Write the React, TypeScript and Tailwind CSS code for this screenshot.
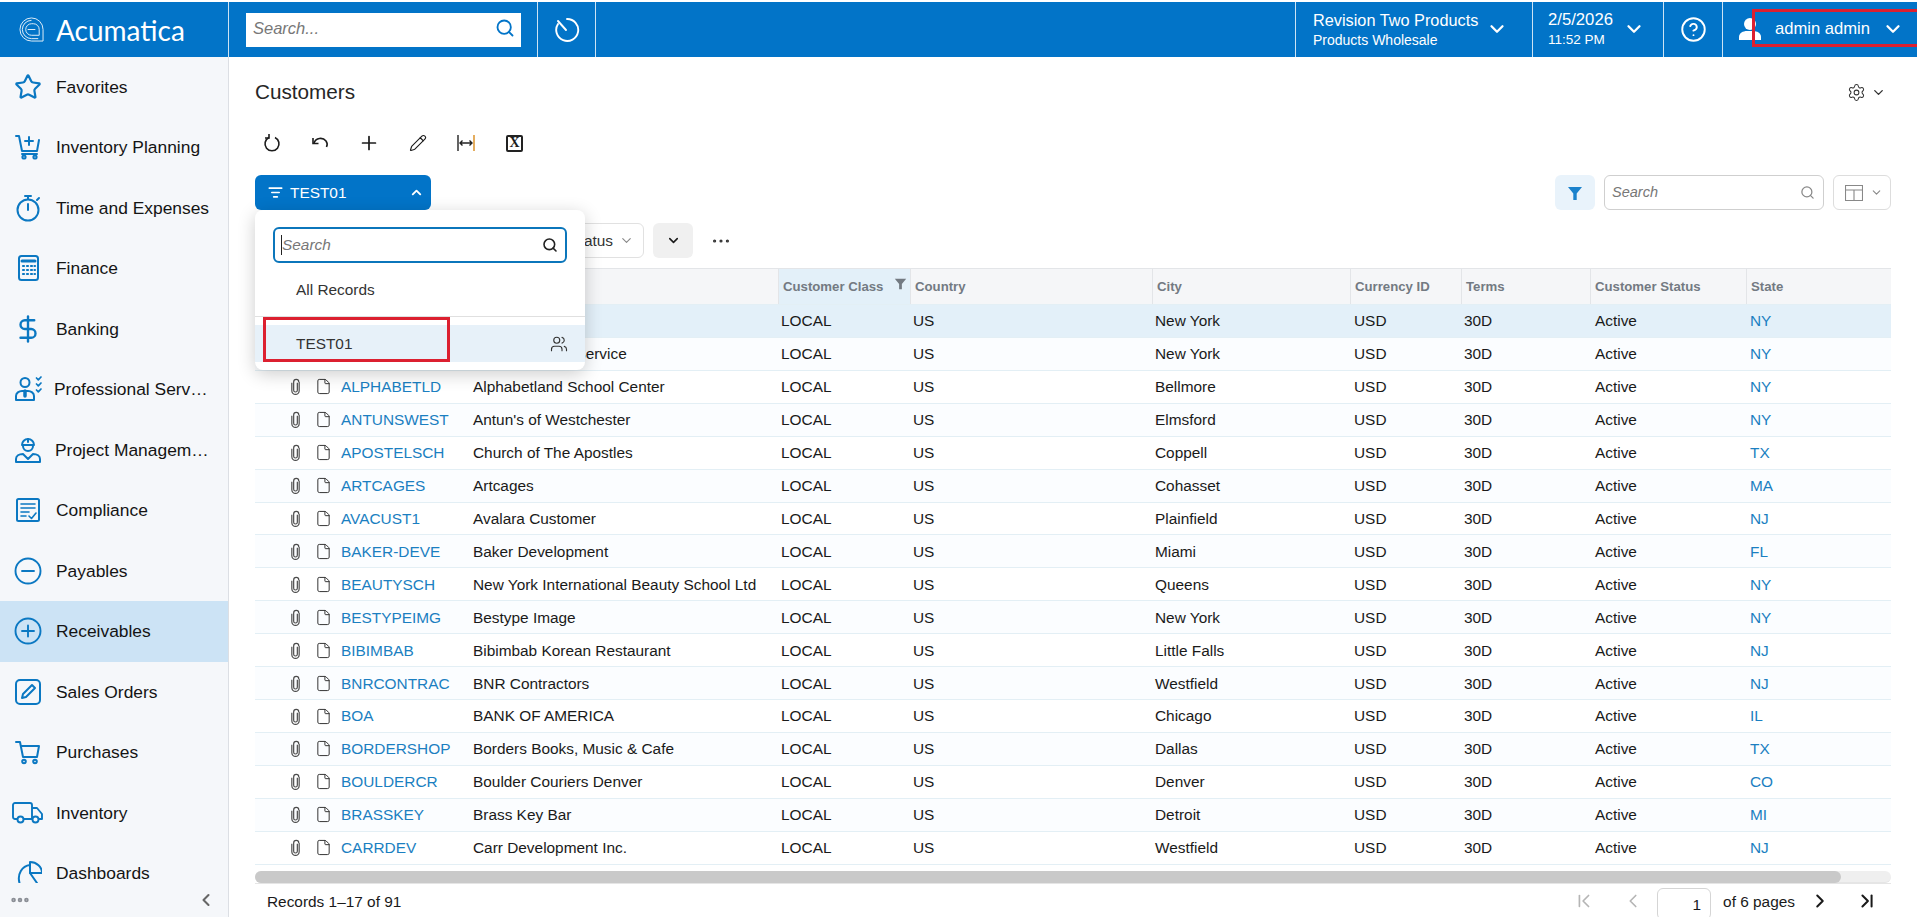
import React from "react";
import {
  ChevronDown,
  ChevronFirst,
  ChevronLast,
  ChevronLeft,
  ChevronRight,
  ChevronUp,
  CircleHelp,
  DollarSign,
  File,
  ListFilter,
  MoreHorizontal,
  Pencil,
  Plus,
  Search,
  Settings,
  Star,
  Users,
} from "lucide-react";

const rows = [
  ["AACUSTOMER", "AA Customer", "New York", "NY"],
  ["ACTIVESTAF", "Active Staffing Service", "New York", "NY"],
  ["ALPHABETLD", "Alphabetland School Center", "Bellmore", "NY"],
  ["ANTUNSWEST", "Antun's of Westchester", "Elmsford", "NY"],
  ["APOSTELSCH", "Church of The Apostles", "Coppell", "TX"],
  ["ARTCAGES", "Artcages", "Cohasset", "MA"],
  ["AVACUST1", "Avalara Customer", "Plainfield", "NJ"],
  ["BAKER-DEVE", "Baker Development", "Miami", "FL"],
  ["BEAUTYSCH", "New York International Beauty School Ltd", "Queens", "NY"],
  ["BESTYPEIMG", "Bestype Image", "New York", "NY"],
  ["BIBIMBAB", "Bibimbab Korean Restaurant", "Little Falls", "NJ"],
  ["BNRCONTRAC", "BNR Contractors", "Westfield", "NJ"],
  ["BOA", "BANK OF AMERICA", "Chicago", "IL"],
  ["BORDERSHOP", "Borders Books, Music & Cafe", "Dallas", "TX"],
  ["BOULDERCR", "Boulder Couriers Denver", "Denver", "CO"],
  ["BRASSKEY", "Brass Key Bar", "Detroit", "MI"],
  ["CARRDEV", "Carr Development Inc.", "Westfield", "NJ"],
];

const gridCols =
  "grid grid-cols-[80px_132px_311px_132px_242px_198px_111px_129px_156px_145px]";

const Glyph = ({ children }: { children: React.ReactNode }) => (
  <svg
    viewBox="0 0 28 28"
    fill="none"
    stroke="currentColor"
    strokeWidth="2"
    strokeLinecap="round"
    strokeLinejoin="round"
    className="w-[28px] h-[28px]"
  >
    {children}
  </svg>
);

// Sidebar icons, drawn to follow the module glyphs
const CartPlus = () => (
  <Glyph>
    <path d="M2 3h3l3 15h15l2-11" />
    <path d="M8 21h15" />
    <circle cx="10" cy="24" r="1.6" />
    <circle cx="21" cy="24" r="1.6" />
    <path d="M15 4v8M11 8h8" />
  </Glyph>
);
const Timer = () => (
  <Glyph>
    <circle cx="14" cy="16" r="10.5" />
    <path d="M14 5V2M11 2h6M14 10v6M23 6l2-2" />
  </Glyph>
);
const Calculator = () => (
  <Glyph>
    <rect x="5" y="2" width="19" height="24" rx="2.5" />
    <path d="M8 7h13" strokeWidth="3" />
    <path
      d="M9 12h1M13 12h1M17 12h1M20.500 12h.5M9 16h1M13 16h1M17 16h1M20.500 16h.5M9 20h1M13 20h1M17 20h1M20.500 20h.5"
      strokeWidth="2.2"
    />
  </Glyph>
);
const ProServices = () => (
  <Glyph>
    <circle cx="11" cy="7.500" r="4.500" />
    <path d="M2 25v-4c0-3 3-5 6-5h6c3 0 6 2 6 5v4z" />
    <path d="M11 16v5" strokeWidth="3.500" />
    <path d="M22.500 3l1.800 1.800L27 2M22.500 9l1.800 1.800L27 8M22.500 15l1.800 1.800L27 14" strokeWidth="1.700" />
  </Glyph>
);
const ProjectMgmt = () => (
  <Glyph>
    <path d="M8 9a6 6 0 0 1 12 0z" />
    <path d="M9 10a5 5 0 0 0 10 0" />
    <path d="M14 3v3" />
    <path d="M2 26v-3c0-3 3-5 7-5l5 5 5-5c4 0 7 2 7 5v3z" />
  </Glyph>
);
const Compliance = () => (
  <Glyph>
    <rect x="3" y="3" width="22" height="22" rx="1.500" />
    <path d="M7 8h14M7 12h14M7 16h8M7 20h5M15 20l2.500 2.500L22 17" strokeWidth="1.600" />
  </Glyph>
);
const CircleSign = ({ plus }: { plus?: boolean }) => (
  <svg viewBox="0 0 28 28" fill="none" stroke="currentColor" strokeWidth="1.900" strokeLinecap="round" className="w-[30px] h-[28px]">
    <circle cx="14" cy="14" r="12.500" />
    <path d="M8 14h12" />
    {plus && <path d="M14 8.500v11" />}
  </svg>
);
const SalesOrder = () => (
  <Glyph>
    <rect x="2" y="2" width="24" height="24" rx="4" />
    <path d="M8 20l1-4 9-9 3 3-9 9z" />
  </Glyph>
);
const Cart = () => (
  <Glyph>
    <path d="M2 4h4l3 15h14l2-11H7" />
    <circle cx="10" cy="23.500" r="1.800" />
    <circle cx="21" cy="23.500" r="1.800" />
  </Glyph>
);
const Truck = () => (
  <svg viewBox="0 0 32 22" fill="none" stroke="currentColor" strokeWidth="1.900" strokeLinejoin="round" className="w-[32px] h-[24px]">
    <path d="M5 17H3a2 2 0 0 1-2-2V3a2 2 0 0 1 2-2h15a2 2 0 0 1 2 2v14h-8" />
    <path d="M20 6h5l5 6v5h-3" />
    <circle cx="8.500" cy="17.500" r="3" />
    <circle cx="23.500" cy="17.500" r="3" />
  </svg>
);
const Pie = () => (
  <Glyph>
    <path d="M16 3a12 11 0 0 1 12 11H16z" />
    <path d="M16 6C8 7 3 15 5.500 24" />
    <path d="M16 14l7 10" />
  </Glyph>
);

const navItems: { label: string; icon: React.ReactNode; active?: boolean; labelClass?: string }[] = [
  { label: "Favorites", icon: <Star className="w-[28px] h-[28px]" strokeWidth={1.900} /> },
  { label: "Inventory Planning", icon: <CartPlus /> },
  { label: "Time and Expenses", icon: <Timer /> },
  { label: "Finance", icon: <Calculator /> },
  { label: "Banking", icon: <DollarSign className="w-[30px] h-[30px]" strokeWidth={1.900} /> },
  { label: "Professional Serv…", icon: <ProServices />, labelClass: "-ml-[2px]" },
  { label: "Project Managem…", icon: <ProjectMgmt />, labelClass: "-ml-[1px]" },
  { label: "Compliance", icon: <Compliance /> },
  { label: "Payables", icon: <CircleSign /> },
  { label: "Receivables", icon: <CircleSign plus />, active: true },
  { label: "Sales Orders", icon: <SalesOrder /> },
  { label: "Purchases", icon: <Cart /> },
  { label: "Inventory", icon: <Truck /> },
  { label: "Dashboards", icon: <Pie /> },
];

const Paperclip = () => (
  <svg viewBox="0 0 12 18" fill="none" stroke="#4b4b4b" strokeWidth="1.300" className="w-[11px] h-[17px]">
    <path d="M8 5v8a2 2 0 0 1-4 0V4a2.800 2.800 0 0 1 5.600 0M2 5v8.500a4 4 0 0 0 8 0V4" />
  </svg>
);

const TopDivider = () => <div className="w-px h-full bg-white/80 shrink-0" />;

const App: React.FC = () => {
  return (
    <div className="w-[1917px] h-[917px] overflow-hidden bg-white pt-[2px] flex flex-col font-['Liberation_Sans',Arial,sans-serif] text-[#1a1a1a]">
      {/* Top bar */}
      <header className="relative h-[55px] shrink-0 flex items-center bg-[#0274c8] text-white">
        <div className="w-[228px] shrink-0 flex items-center pl-[19px] gap-[12px]">
          <svg viewBox="0 0 26 26" fill="none" stroke="white" strokeWidth="1" className="w-[25px] h-[25px] opacity-90">
            <path d="M13 1a12 12 0 0 0 0 24h12V13A12 12 0 0 0 13 1z" />
            <path d="M13 3.500a9.500 9.500 0 0 0 0 19h7" />
            <path d="M13 7a6 6 0 0 0 0 12h8V13a6 6 0 0 0-6-6z" />
            <path d="M9 13h8" />
          </svg>
          <span className="font-['Lato',sans-serif] text-[28px] leading-none">Acumatica</span>
        </div>
        <TopDivider />
        <div className="w-[308px] shrink-0 pl-[17px]">
          <div className="w-[275px] h-[34px] bg-white flex items-center justify-between pl-[7px] pr-[6px] pb-[3px]">
            <span className="italic text-[16.5px] text-[#777]">Search...</span>
            <Search className="w-[20px] h-[20px] text-[#0274c8]" strokeWidth={2.2} />
          </div>
        </div>
        <TopDivider />
        <div className="w-[57px] shrink-0 flex justify-center">
          <svg viewBox="0 0 26 26" fill="none" stroke="white" strokeWidth="1.900" strokeLinecap="round" className="w-[26px] h-[26px]">
            <path d="M13 2a11 11 0 1 1-9 5" />
            <path d="M4 4l8 9" />
          </svg>
        </div>
        <TopDivider />
        <div className="flex-1" />
        <TopDivider />
        <div className="w-[236px] shrink-0 flex items-center pl-[17px]">
          <div className="w-[167px] leading-none whitespace-nowrap">
            <div className="text-[16.3px] mb-[4px]">Revision Two Products</div>
            <div className="text-[14px]">Products Wholesale</div>
          </div>
          <ChevronDown className="w-[22px] h-[22px] ml-[6px]" strokeWidth={2.5} />
        </div>
        <TopDivider />
        <div className="w-[130px] shrink-0 flex items-center pl-[15px]">
          <div className="w-[76px] leading-none whitespace-nowrap">
            <div className="text-[16.7px] mb-[4px]">2/5/2026</div>
            <div className="text-[13.500px]">11:52 PM</div>
          </div>
          <ChevronDown className="w-[22px] h-[22px] ml-[-1px]" strokeWidth={2.5} />
        </div>
        <TopDivider />
        <div className="w-[58px] shrink-0 flex justify-center">
          <CircleHelp className="w-[27px] h-[27px]" strokeWidth={1.7} />
        </div>
        <TopDivider />
        <div className="w-[194px] shrink-0 flex items-center pl-[16px]">
          <svg viewBox="0 0 22 24" fill="white" className="w-[22px] h-[24px]">
            <circle cx="11" cy="7" r="6" />
            <path d="M0 23v-3c0-4 4-6 8-6h6c4 0 8 2 8 6v3z" />
          </svg>
          <span className="ml-[14px] text-[16.6px] whitespace-nowrap">admin admin</span>
          <ChevronDown className="w-[22px] h-[22px] ml-[12px]" strokeWidth={2.5} />
        </div>
        {/* Callout drawn over the user menu */}
        <div className="absolute left-[1752px] top-[7px] w-[170px] h-[38px] border-[3px] border-[#dc2030]" />
      </header>

      <div className="flex-1 flex min-h-0">
        {/* Sidebar */}
        <aside className="w-[229px] shrink-0 flex flex-col bg-[#f5f7fa] border-r border-[#dcdfe4]">
          <nav className="flex-1 min-h-0 overflow-hidden">
            <div className="-mt-[0.5px]">
              {navItems.map((item) => (
                <div
                  key={item.label}
                  className={`h-[60.5px] flex items-center text-[17.4px] text-[#141414] ${item.active ? "bg-[#cce3f5]" : ""}`}
                >
                  <div className="w-[56px] shrink-0 flex justify-center text-[#0b78c2]">{item.icon}</div>
                  <span className={`whitespace-nowrap ${item.labelClass ?? ""}`}>{item.label}</span>
                </div>
              ))}
            </div>
          </nav>
          <div className="h-[34px] shrink-0 flex items-center justify-between pl-[9px] pr-[12px] text-[#8b8f96]">
            <MoreHorizontal className="w-[22px] h-[22px]" strokeWidth={3} />
            <ChevronLeft className="w-[20px] h-[20px] text-[#666]" strokeWidth={2.5} />
          </div>
        </aside>

        {/* Content */}
        <main className="relative flex-1 min-w-0 px-[26px] flex flex-col">
          <div className="h-[70px] shrink-0 flex items-center justify-between">
            <h1 className="text-[20.7px] text-[#262626]">Customers</h1>
            <div className="flex items-center gap-[5px] mr-[5px] text-[#333]">
              <Settings className="w-[19px] h-[19px]" strokeWidth={1.300} />
              <ChevronDown className="w-[15px] h-[15px]" strokeWidth={2.2} />
            </div>
          </div>

          <div className="h-[32px] shrink-0 flex items-center gap-[14.5px] text-[#1c1c1c]">
            <div className="w-[34px] flex justify-center">
              <svg viewBox="0 0 20 20" fill="none" stroke="currentColor" strokeWidth="1.600" className="w-[20px] h-[20px]">
                <path d="M7 4.500a7 7 0 1 0 6 0" />
                <path d="M7 1v4H3" />
              </svg>
            </div>
            <div className="w-[34px] flex justify-center">
              <svg viewBox="0 0 20 20" fill="none" stroke="currentColor" strokeWidth="1.600" className="w-[20px] h-[20px]">
                <path d="M3 10a7 7 0 0 1 12-2c1.500 2 1.500 4 .5 6" />
                <path d="M2 5v5.500h5.500" />
              </svg>
            </div>
            <div className="w-[34px] flex justify-center">
              <Plus className="w-[22px] h-[22px]" strokeWidth={1.900} />
            </div>
            <div className="w-[34px] flex justify-center">
              <Pencil className="w-[18px] h-[18px]" strokeWidth={1.500} />
            </div>
            <div className="w-[34px] flex justify-center">
              <svg viewBox="0 0 20 20" fill="none" strokeWidth="1.400" className="w-[20px] h-[20px]">
                <path d="M2 2v16" stroke="#222" />
                <path d="M18 2v16" stroke="#d98a1c" />
                <path d="M4 10h12M6.500 7.500L4 10l2.500 2.500M13.500 7.500L16 10l-2.500 2.500" stroke="#222" />
              </svg>
            </div>
            <div className="w-[34px] flex justify-center">
              <div className="w-[17px] h-[17px] border-[2px] border-[#222] flex items-center justify-center rounded-[2px]">
                <span className="font-['Liberation_Serif',serif] font-bold text-[14px] leading-none">X</span>
              </div>
            </div>
          </div>

          <div className="mt-[16px] h-[35px] shrink-0 flex items-center justify-between">
            <div className="w-[176px] h-[35px] rounded-[6px] bg-[#0274c8] text-white flex items-center pl-[13px] pr-[7px]">
              <ListFilter className="w-[15px] h-[15px]" strokeWidth={2.5} />
              <span className="ml-[7px] text-[15.4px] flex-1">TEST01</span>
              <ChevronUp className="w-[15px] h-[15px]" strokeWidth={3} />
            </div>
            <div className="flex items-center">
              <div className="w-[40px] h-[35px] rounded-[6px] bg-[#e9f3fb] flex items-center justify-center">
                <svg viewBox="0 0 16 16" fill="#1b82cc" className="w-[16px] h-[16px]">
                  <path d="M1 2h14L9.700 8.500V15H6.300V8.500z" />
                </svg>
              </div>
              <div className="ml-[9px] w-[220px] h-[35px] rounded-[6px] border border-[#cfcfcf] flex items-center justify-between pl-[7px] pr-[8px]">
                <span className="italic text-[14.5px] text-[#777]">Search</span>
                <Search className="w-[15px] h-[15px] text-[#888]" strokeWidth={2} />
              </div>
              <div className="ml-[9px] w-[58px] h-[35px] rounded-[6px] border border-[#dddddd] flex items-center pl-[11px] gap-[7px] text-[#888]">
                <svg viewBox="0 0 18 18" fill="none" stroke="currentColor" strokeWidth="1.100" className="w-[18px] h-[18px]">
                  <path d="M.5 1.500h17v15H.5zM.5 6h17M9 6v10.500" />
                </svg>
                <ChevronDown className="w-[13px] h-[13px]" strokeWidth={2} />
              </div>
            </div>
          </div>

          <div className="mt-[13px] h-[35px] shrink-0 flex items-center">
            <div className="ml-[210px] w-[179px] h-[35px] rounded-[6px] border border-[#e1e1e1] flex items-center justify-end pr-[9px] gap-[6px] text-[15.4px] text-[#333] whitespace-nowrap">
              <span>Customer Status</span>
              <ChevronDown className="w-[15px] h-[15px] text-[#888]" strokeWidth={1.800} />
            </div>
            <div className="ml-[9px] w-[40px] h-[35px] rounded-[6px] bg-[#f0f0f0] flex items-center justify-center">
              <ChevronDown className="w-[15px] h-[15px]" strokeWidth={2.5} />
            </div>
            <MoreHorizontal className="ml-[17px] w-[22px] h-[22px] text-[#333]" strokeWidth={1.500} />
          </div>

          {/* Table */}
          <div className="mt-[10px] w-[1636px] shrink-0">
            <div className={`${gridCols} h-[36px] bg-[#f5f6f8] border-t border-[#e3e5e8] text-[13.2px] font-bold text-[#737a82] items-stretch`}>
              <div />
              <div />
              <div />
              <div className="flex items-center justify-between pl-[4px] pr-[3px] border-l border-[#e3e5e8] bg-[#e3f0f9]">
                <span className="whitespace-nowrap">Customer Class</span>
                <svg viewBox="0 0 16 16" fill="#737a82" className="w-[13px] h-[13px] mb-[6px]">
                  <path d="M1 2h14L9.700 8.500V15H6.300V8.500z" />
                </svg>
              </div>
              {["Country", "City", "Currency ID", "Terms", "Customer Status", "State"].map((h) => (
                <div key={h} className="flex items-center pl-[4px] border-l border-[#e3e5e8]">
                  {h}
                </div>
              ))}
            </div>
            {rows.map((r, i) => (
              <div
                key={r[0]}
                className={`${gridCols} h-[32.93px] items-center text-[15.4px] border-t border-[#e3eff5] whitespace-nowrap ${
                  i === 0 ? "bg-[#e3f0f9]" : i % 2 === 1 ? "bg-[#fbfdff]" : "bg-white"
                }`}
              >
                <div className="flex items-center pl-[35px] gap-[14px]">
                  <Paperclip />
                  <File className="w-[17px] h-[17px] text-[#333]" strokeWidth={1.400} />
                </div>
                <div className="pl-[6px] text-[#1b7fc1]">{r[0]}</div>
                <div className="pl-[6px]">{r[1]}</div>
                <div className="pl-[3px]">LOCAL</div>
                <div className="pl-[3px]">US</div>
                <div className="pl-[3px]">{r[2]}</div>
                <div className="pl-[4px]">USD</div>
                <div className="pl-[3px]">30D</div>
                <div className="pl-[5px]">Active</div>
                <div className="pl-[4px] text-[#1b7fc1]">{r[3]}</div>
              </div>
            ))}
            {/* Horizontal scrollbar */}
            <div className="border-t border-[#e3eff5] pt-[6px] border-b-0">
              <div className="h-[12px] rounded-full bg-[#efefef] border-b border-[#e5e5e5]">
                <div className="h-[12px] w-[1586px] rounded-full bg-[#c9c9c9]" />
              </div>
            </div>
          </div>

          {/* Footer */}
          <div className="h-[36px] shrink-0 w-[1636px] flex items-center text-[15.4px] border-t border-[#e5e5e5]">
            <span className="ml-[12px]">Records 1–17 of 91</span>
            <div className="ml-auto flex items-center">
              <ChevronFirst className="w-[22px] h-[22px] text-[#b5b5b5]" strokeWidth={1.800} />
              <ChevronLeft className="ml-[27px] w-[22px] h-[22px] text-[#b5b5b5]" strokeWidth={1.800} />
              <div className="ml-[13px] mt-[6px] w-[54px] h-[32px] rounded-[6px] border border-[#d5d5d5] flex items-center justify-end pr-[9px]">
                1
              </div>
              <span className="ml-[12px]">of 6 pages</span>
              <ChevronRight className="ml-[14px] w-[22px] h-[22px] text-[#1a1a1a]" strokeWidth={2.2} />
              <ChevronLast className="ml-[25px] mr-[13px] w-[22px] h-[22px] text-[#1a1a1a]" strokeWidth={2.2} />
            </div>
          </div>

          {/* Saved filter dropdown, open over the grid */}
          <div className="absolute left-[26px] top-[153px] w-[330px] h-[160px] bg-white rounded-[8px] shadow-[0_4px_18px_rgba(0,0,0,0.2)] overflow-hidden">
            <div className="mx-[18px] mt-[17px] h-[36px] rounded-[6px] border-[2px] border-[#0b76bb] flex items-center justify-between pl-[6px] pr-[7px]">
              <span className="italic text-[15.4px] text-[#777] border-l border-[#222] leading-[20px]">Search</span>
              <Search className="w-[16px] h-[16px] text-[#222]" strokeWidth={2.4} />
            </div>
            <div className="h-[54px] flex items-center pl-[41px] text-[15.4px] text-[#333] border-b border-[#e0e0e0]">All Records</div>
            <div className="mt-[8px] h-[37px] bg-[#e7f1f9] flex items-center justify-between pl-[41px] pr-[17px] text-[15.4px] text-[#333]">
              <span>TEST01</span>
              <Users className="w-[18px] h-[18px]" strokeWidth={1.500} />
            </div>
          </div>
          <div className="absolute left-[34px] top-[260px] w-[187px] h-[45px] border-[3px] border-[#dc2030]" />
        </main>
      </div>
    </div>
  );
};

export default App;
